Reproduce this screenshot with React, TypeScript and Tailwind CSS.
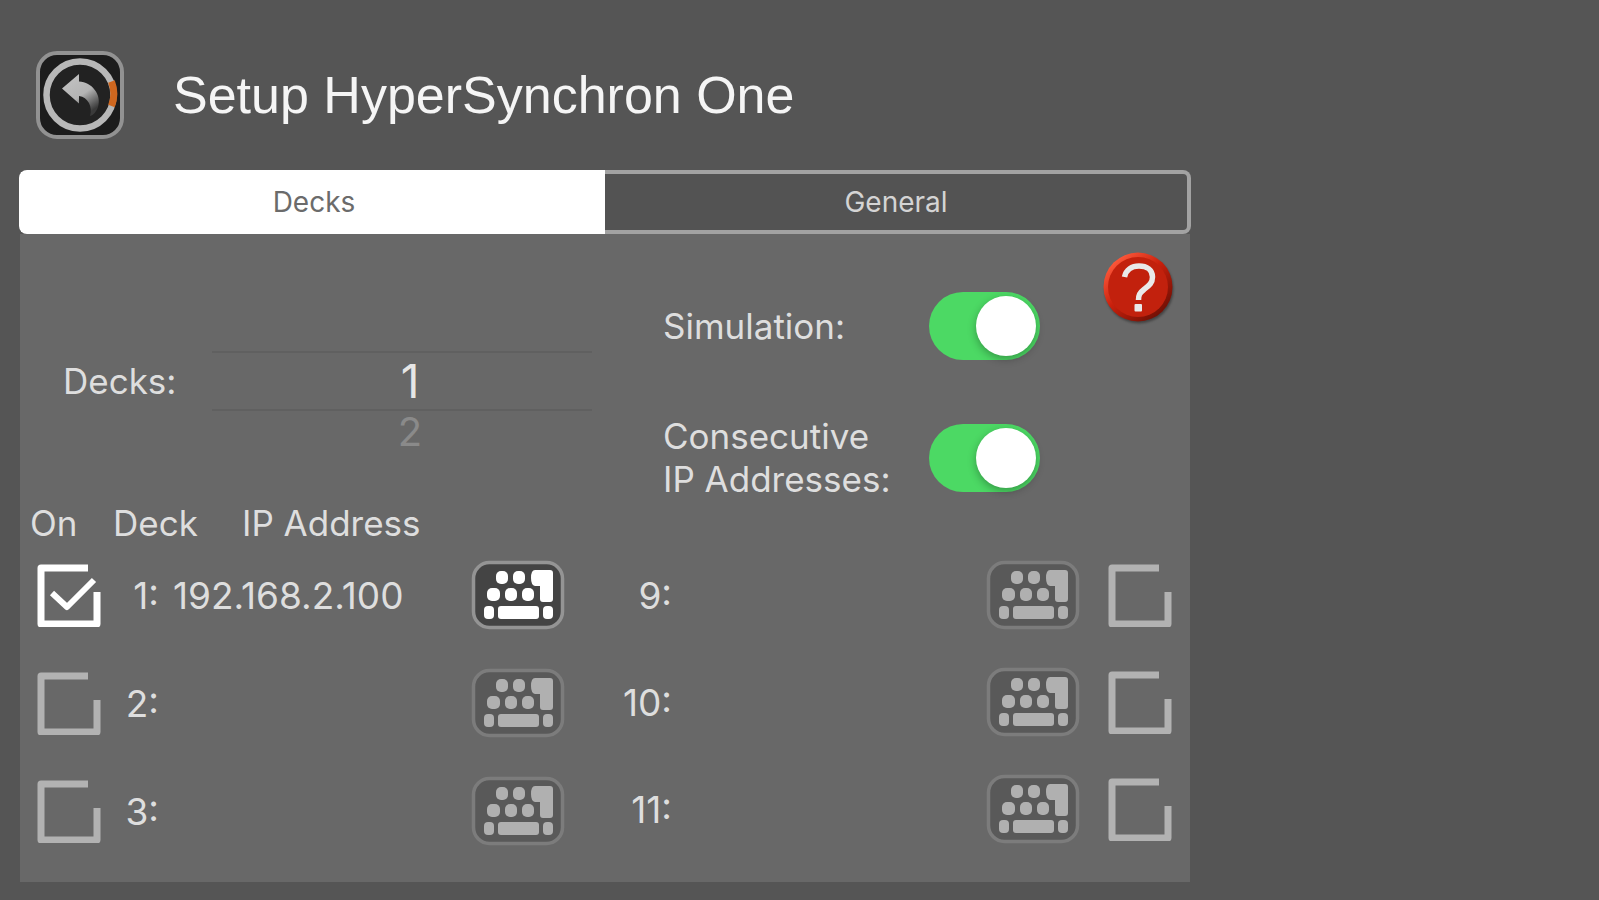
import { useState } from 'react';

type Tab = 'decks' | 'general';

interface Deck {
  id: number;
  ip: string;
  on: boolean;
}

const initialDecks: Deck[] = [
  { id: 1, ip: '192.168.2.100', on: true },
  { id: 2, ip: '', on: false },
  { id: 3, ip: '', on: false },
  { id: 9, ip: '', on: false },
  { id: 10, ip: '', on: false },
  { id: 11, ip: '', on: false },
];

function BackIcon() {
  return (
    <svg viewBox="0 0 88 88" className="size-[88px]" aria-hidden="true">
      <defs>
        <linearGradient id="arrow" x1="0" y1="0" x2="0.6" y2="1">
          <stop offset="0" stopColor="#c4c4c4" />
          <stop offset="0.6" stopColor="#b4b4b4" />
          <stop offset="1" stopColor="#3a3a3a" />
        </linearGradient>
      </defs>
      <rect x="2" y="2" width="84" height="84" rx="19" fill="#1c1c1c" stroke="#929292" strokeWidth="4" />
      <circle cx="44" cy="44" r="33.5" fill="#222" stroke="#b8b8b8" strokeWidth="6.5" />
      <path d="M75.500 30.5A34 34 0 0 1 75.500 55" fill="none" stroke="#cf671f" strokeWidth="7" />
      <path
        d="M26 37.500L43 23V30.500C56 31 66 44 62 56C60.500 60 58 64 54 65C57 56 52 46 43 45V52.500Z"
        fill="url(#arrow)"
      />
    </svg>
  );
}

function HelpIcon() {
  return (
    <svg viewBox="0 0 70 70" className="size-[70px] overflow-visible drop-shadow-[1px_2px_1px_rgba(0,0,0,0.35)]" aria-hidden="true">
      <defs>
        <linearGradient id="rim" x1="0.15" y1="0.1" x2="0.85" y2="0.9">
          <stop offset="0" stopColor="#ff5a3c" />
          <stop offset="0.45" stopColor="#c9200c" />
          <stop offset="1" stopColor="#6e0f04" />
        </linearGradient>
      </defs>
      <circle cx="35" cy="35" r="34.5" fill="url(#rim)" />
      <circle cx="35" cy="35" r="30" fill="#c2210d" />
      <path
        d="M21.500 25C23 17.500 29 14 36 14C44 14 49.500 18 49.500 25C49.500 31 46 33.500 41 37.500C36.500 41 35.500 43 35.500 48"
        fill="none"
        stroke="#e9e9e9"
        strokeWidth="5.5"
      />
      <rect x="31.500" y="52" width="7.500" height="7.500" rx="1" fill="#e9e9e9" />
    </svg>
  );
}

function KeyboardIcon({ active }: { active: boolean }) {
  return (
    <svg viewBox="0 0 94 70" className="h-[70px] w-[94px]" aria-hidden="true">
      <rect
        x="2.500"
        y="2.500"
        width="89"
        height="65"
        rx="16"
        fill={active ? '#444' : '#595959'}
        stroke={active ? '#949494' : '#7c7c7c'}
        strokeWidth="3.5"
      />
      <g fill={active ? '#fff' : '#b0b0b0'}>
        <rect x="25" y="11" width="12" height="13" rx="5" />
        <rect x="42" y="11" width="12" height="13" rx="5" />
        <path d="M64 10H79Q82 10 82 13V39Q82 42 79 42H72Q69 42 69 39V26H64Q60 25 60 18Q60 10 64 10Z" />
        <rect x="16" y="28" width="13" height="13" rx="5" />
        <rect x="34" y="28" width="12" height="13" rx="5" />
        <rect x="51" y="28" width="12" height="13" rx="5" />
        <rect x="13" y="46" width="10" height="13" rx="4" />
        <rect x="27" y="46" width="41" height="13" rx="3" />
        <rect x="72" y="46" width="10" height="13" rx="4" />
      </g>
    </svg>
  );
}

function KeyboardButton({ deck }: { deck: Deck }) {
  return (
    <button type="button" aria-label={`Edit IP address of deck ${deck.id}`} className="shrink-0">
      <KeyboardIcon active={deck.on} />
    </button>
  );
}

function DeckCheckbox({ deck, onToggle }: { deck: Deck; onToggle: (id: number) => void }) {
  return (
    <label className="relative block size-16 shrink-0">
      <input
        type="checkbox"
        aria-label={`Deck ${deck.id} on`}
        checked={deck.on}
        onChange={() => onToggle(deck.id)}
        className="absolute inset-0 size-full cursor-pointer appearance-none"
      />
      <svg
        viewBox="0 0 64 64"
        fill="none"
        strokeLinejoin="round"
        className={deck.on ? 'pointer-events-none size-full stroke-white' : 'pointer-events-none size-full stroke-[#b2b2b2]'}
        aria-hidden="true"
      >
        <path d="M51 5H4V61H60V29" strokeWidth="7" />
        {deck.on && <path d="M15 30L30 44L57 17" strokeWidth="6" />}
      </svg>
    </label>
  );
}

function Switch({ id, checked, onChange }: { id: string; checked: boolean; onChange: (value: boolean) => void }) {
  return (
    <input
      id={id}
      type="checkbox"
      role="switch"
      checked={checked}
      onChange={(e) => onChange(e.target.checked)}
      className="flex h-[68px] w-[111px] shrink-0 cursor-pointer appearance-none items-center rounded-full bg-[#8a8a8a] px-1 before:size-[60px] before:rounded-full before:bg-white before:shadow-[0_3px_8px_rgba(0,0,0,0.3)] checked:justify-end checked:bg-[#4cd964]"
    />
  );
}

export default function App() {
  const [tab, setTab] = useState<Tab>('decks');
  const [deckCount, setDeckCount] = useState(1);
  const [simulation, setSimulation] = useState(true);
  const [consecutive, setConsecutive] = useState(true);
  const [decks, setDecks] = useState(initialDecks);

  const toggleDeck = (id: number) => {
    setDecks((prev) => prev.map((d) => (d.id === id ? { ...d, on: !d.on } : d)));
  };

  const tabClass = (value: Tab) =>
    tab === value
      ? 'flex-1 border-4 border-white bg-white text-[#6b6b6b] first:rounded-l-lg first:border-r-0 last:rounded-r-lg last:border-l-0'
      : 'flex-1 border-4 border-[#a2a2a2] bg-[#535353] text-[#d4d4d4] first:rounded-l-lg first:border-r-0 last:rounded-r-lg last:border-l-0';

  return (
    <div className="min-h-screen bg-[#555] px-[19px] pt-[51px] pb-[19px] font-['Inter',sans-serif] text-[35px] leading-[43px] text-[#dedede]">
      <main className="w-full max-w-[1172px]">
        <header className="mb-[31px] flex items-center gap-[49px] pl-[17px]">
          <button type="button" aria-label="Back" className="shrink-0">
            <BackIcon />
          </button>
          <h1 className="font-['Liberation_Sans',sans-serif] text-[52px] leading-[60px] text-[#f5f5f5]">
            Setup HyperSynchron One
          </h1>
        </header>

        <div role="tablist" className="flex h-16 text-[28px]">
          <button type="button" role="tab" aria-selected={tab === 'decks'} onClick={() => setTab('decks')} className={tabClass('decks')}>
            Decks
          </button>
          <button type="button" role="tab" aria-selected={tab === 'general'} onClick={() => setTab('general')} className={tabClass('general')}>
            General
          </button>
        </div>

        <section className="mx-px grid grid-cols-2 bg-[#686868] pb-9">
          <div>
            <div className="flex h-[270px] items-center pt-6 pl-[43px]">
              <span id="deck-count" className="w-[149px]">Decks:</span>
              {/* Wheel picker: selected value between the lines, the next one below */}
              <div role="listbox" aria-labelledby="deck-count" className="grid w-[380px] grid-rows-[42px_60px_42px]">
                <button
                  type="button"
                  role="option"
                  aria-selected="true"
                  className="row-start-2 border-y-2 border-[#606060] pl-4 text-[46px] leading-[54px] text-[#e6e6e6]"
                >
                  {deckCount}
                </button>
                <button
                  type="button"
                  role="option"
                  aria-selected="false"
                  onClick={() => setDeckCount(deckCount + 1)}
                  className="row-start-3 pl-4 text-[40px] leading-9 text-[#8a8a8a]"
                >
                  {deckCount + 1}
                </button>
              </div>
            </div>

            <div className="mb-[17px] flex h-[39px] items-center pl-[10px] whitespace-nowrap">
              <span className="w-[83px]">On</span>
              <span className="w-[129px]">Deck</span>
              <span>IP Address</span>
            </div>

            <ul className="flex flex-col gap-[38px] pr-10 pl-[17px] text-[37px]">
              {decks.slice(0, 3).map((deck) => (
                <li key={deck.id} className="flex h-[70px] items-center">
                  <DeckCheckbox deck={deck} onToggle={toggleDeck} />
                  <span className="w-[58px] text-right">{deck.id}:</span>
                  <span className="flex-1 pl-[14px]">{deck.ip}</span>
                  <KeyboardButton deck={deck} />
                </li>
              ))}
            </ul>
          </div>

          <div>
            <div className="flex h-[326px] items-start justify-between pt-[18px] pr-[17px] pl-[58px]">
              <div className="flex flex-col gap-16 pt-10">
                <div className="flex h-[68px] items-center">
                  <label htmlFor="simulation" className="w-[266px]">Simulation:</label>
                  <Switch id="simulation" checked={simulation} onChange={setSimulation} />
                </div>
                <div className="flex h-[68px] items-center">
                  <label htmlFor="consecutive" className="w-[266px]">
                    Consecutive
                    <br />
                    IP Addresses:
                  </label>
                  <Switch id="consecutive" checked={consecutive} onChange={setConsecutive} />
                </div>
              </div>
              <button type="button" aria-label="Help" className="shrink-0">
                <HelpIcon />
              </button>
            </div>

            <ul className="flex flex-col gap-[37px] pr-[18px] text-[37px]">
              {decks.slice(3).map((deck) => (
                <li key={deck.id} className="flex h-[70px] items-center">
                  <span className="w-[67px] text-right">{deck.id}:</span>
                  <span className="flex-1 pl-[14px]">{deck.ip}</span>
                  <KeyboardButton deck={deck} />
                  <span className="w-7" />
                  <DeckCheckbox deck={deck} onToggle={toggleDeck} />
                </li>
              ))}
            </ul>
          </div>
        </section>
      </main>
    </div>
  );
}
